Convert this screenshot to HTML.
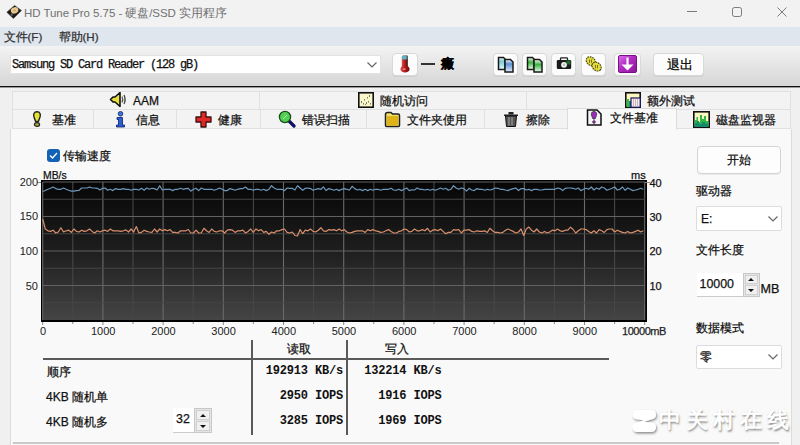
<!DOCTYPE html>
<html><head><meta charset="utf-8">
<style>
*{margin:0;padding:0;box-sizing:border-box}
html,body{width:800px;height:445px;overflow:hidden;background:#f0f0f0;font-family:"Liberation Sans",sans-serif;color:#111}
.t{position:absolute;white-space:nowrap;line-height:1;-webkit-text-stroke:0.25px currentColor}
.abs{position:absolute}
.btn{position:absolute;background:#fcfcfc;border:1px solid #d9d9d9;border-radius:4px;box-shadow:0 1px 0 rgba(0,0,0,0.06)}
.xl{position:absolute;top:326px;width:80px;text-align:center;font-size:11px;line-height:1;color:#222}
.yl{position:absolute;width:30px;text-align:right;font-size:11px;line-height:1;color:#222}
.mono{font-family:"Liberation Mono",monospace}
.val{letter-spacing:-0.18px;-webkit-text-stroke:0 !important}
.tab{position:absolute;font-size:12px;line-height:1;color:#111;-webkit-text-stroke:0.25px currentColor}
</style></head><body>
<!-- title bar -->
<div class="abs" style="left:0;top:0;width:800px;height:27px;background:#f2f2f2"></div>
<svg class="abs" style="left:0;top:0" width="24" height="24" viewBox="0 0 24 24">
  <path d="M6.8 12.2 L14.6 5.4 L21.5 10.6 L13.4 18.6 Z" fill="#1a1a1a" stroke="#333" stroke-width="0.5" stroke-linejoin="round"/>
  <ellipse cx="14.6" cy="10.4" rx="3.8" ry="3.1" transform="rotate(-20 14.6 10.4)" fill="#e9c98f"/>
  <ellipse cx="14.6" cy="10.4" rx="1.3" ry="1" fill="#c9a46a"/>
  <path d="M10.5 14.5 L12 16 L13 15 L11.5 13.5 Z" fill="#777"/>
</svg>
<div class="t" style="left:24px;top:7.5px;font-size:11.5px;letter-spacing:-0.05px;color:#707070;-webkit-text-stroke:0">HD Tune Pro 5.75 - 硬盘/SSD 实用程序</div>
<div class="abs" style="left:687px;top:11px;width:10px;height:1px;background:#7a7a7a"></div>
<div class="abs" style="left:731.5px;top:7px;width:10px;height:10px;border:1px solid #7a7a7a;border-radius:2.5px"></div>
<svg class="abs" style="left:777px;top:7px" width="10" height="10"><path d="M0.5 0.5 L9.5 9.5 M9.5 0.5 L0.5 9.5" stroke="#7a7a7a" stroke-width="1"/></svg>
<!-- menu bar -->
<div class="abs" style="left:0;top:27px;width:800px;height:19px;background:#dfe6ee"></div>
<div class="t" style="left:3.5px;top:30.5px;font-size:11.6px;color:#333">文件(F)</div>
<div class="t" style="left:58.5px;top:30.5px;font-size:11.6px;color:#333">帮助(H)</div>
<!-- toolbar -->
<div class="abs" style="left:0;top:46px;width:800px;height:40px;background:linear-gradient(#f3f3f3,#d6d6d6)"></div>
<div class="abs" style="left:0;top:86px;width:800px;height:1px;background:#111"></div><div class="abs" style="left:0;top:87px;width:800px;height:1px;background:#9a9a9a"></div>
<div class="abs" style="left:10px;top:55px;width:371px;height:19px;background:#fff;border:1px solid #e2e2e2"></div>
<div class="t mono" style="left:12px;top:59px;font-size:12px;letter-spacing:-1.2px;color:#111">Samsung SD Card Reader (128 gB)</div>
<svg class="abs" style="left:367px;top:62px" width="10" height="7"><path d="M0.5 0.5 L5 5 L9.5 0.5" stroke="#666" stroke-width="1.2" fill="none"/></svg>
<div class="btn" style="left:392px;top:53px;width:26px;height:23px"></div>
<svg class="abs" style="left:399px;top:55px" width="12" height="18" viewBox="0 0 12 18">
  <defs><linearGradient id="th" x1="0" y1="0" x2="1" y2="0"><stop offset="0" stop-color="#e05050"/><stop offset="0.5" stop-color="#b01c1c"/><stop offset="1" stop-color="#6a0c0c"/></linearGradient></defs>
  <rect x="2.8" y="0.5" width="6" height="12" rx="1.5" fill="url(#th)"/>
  <rect x="2.8" y="0.5" width="6" height="4" rx="1.5" fill="#5fb4c0"/>
  <rect x="7.5" y="0.5" width="1.3" height="12" fill="#2a3a3a" opacity="0.6"/>
  <ellipse cx="6" cy="14" rx="4.6" ry="3.6" fill="url(#th)"/>
  <ellipse cx="5.2" cy="14.2" rx="1.4" ry="0.9" fill="#f08080"/>
</svg>
<div class="abs" style="left:421px;top:63px;width:14px;height:2px;background:#333"></div>
<div class="t" style="left:440.5px;top:58px;font-size:12.5px;font-weight:bold;color:#000;-webkit-text-stroke:0.3px #000">癥</div>
<div class="btn" style="left:493px;top:53px;width:25px;height:23px"></div>
<div class="btn" style="left:522px;top:53px;width:25px;height:23px"></div>
<div class="btn" style="left:551px;top:53px;width:25px;height:23px"></div>
<div class="btn" style="left:581px;top:53px;width:25px;height:23px"></div>
<div class="btn" style="left:614px;top:53px;width:27px;height:23px"></div>
<div class="btn" style="left:653px;top:53px;width:51px;height:23px"></div>
<div class="t" style="left:666.5px;top:58.5px;font-size:12.5px;color:#000">退出</div>
<!-- icons -->
<svg class="abs" style="left:497px;top:56px" width="18" height="17" viewBox="0 0 18 17">
  <defs><linearGradient id="d1" x1="0" y1="0" x2="0" y2="1"><stop offset="0" stop-color="#fff"/><stop offset="0.3" stop-color="#7cc8d0"/><stop offset="1" stop-color="#dff"/></linearGradient>
  <linearGradient id="d2" x1="0" y1="0" x2="0" y2="1"><stop offset="0" stop-color="#fff"/><stop offset="0.35" stop-color="#5a90d0"/><stop offset="1" stop-color="#e8f0ff"/></linearGradient>
  <linearGradient id="d3" x1="0" y1="0" x2="0" y2="1"><stop offset="0" stop-color="#fff"/><stop offset="0.4" stop-color="#3cb040"/><stop offset="1" stop-color="#e8ffe8"/></linearGradient></defs>
  <path d="M1.5 1.5 H6.5 L8 3 V13.5 H1.5 Z" fill="url(#d1)" stroke="#1a1a1a" stroke-width="1.5"/>
  <path d="M8 3.5 H13.5 L16 6 V16 H8 Z" fill="url(#d2)" stroke="#1a1a1a" stroke-width="1.5"/>
</svg>
<svg class="abs" style="left:526px;top:56px" width="18" height="17" viewBox="0 0 18 17">
  <path d="M1.5 1.5 H6.5 L8 3 V13.5 H1.5 Z" fill="url(#d3)" stroke="#1a1a1a" stroke-width="1.5"/>
  <path d="M8 3.5 H13.5 L16 6 V16 H8 Z" fill="url(#d3)" stroke="#1a1a1a" stroke-width="1.5"/>
</svg>
<svg class="abs" style="left:556px;top:57px" width="16" height="13" viewBox="0 0 16 13">
  <path d="M4.5 3.5 V1.5 Q4.5 0.8 5.2 0.8 H10.8 Q11.5 0.8 11.5 1.5 V3.5" fill="none" stroke="#222" stroke-width="1.3"/>
  <rect x="0.8" y="3" width="14.4" height="9" rx="1.2" fill="#1c1c1c"/>
  <rect x="10.5" y="3.5" width="4" height="4" fill="#1d6a2a"/>
  <circle cx="8" cy="7.8" r="2.9" fill="#f4f4f4"/><circle cx="8" cy="7.8" r="1.3" fill="#bbb"/>
</svg>
<svg class="abs" style="left:585px;top:56px" width="18" height="16" viewBox="0 0 18 16">
  <g stroke="#4a4612" stroke-width="1.2" stroke-dasharray="1.6 0.8" fill="#e4dc3c">
  <ellipse cx="5.8" cy="5.2" rx="5" ry="3.9" transform="rotate(40 5.8 5.2)"/>
  <ellipse cx="11.6" cy="10.6" rx="5" ry="3.9" transform="rotate(40 11.6 10.6)"/>
  </g>
  <g stroke="#6a6418" stroke-width="0.9"><line x1="4.5" y1="3.5" x2="4.5" y2="6.8"/><line x1="6.5" y1="3.5" x2="6.5" y2="6.8"/><line x1="10.5" y1="9" x2="10.5" y2="12.3"/><line x1="12.5" y1="9" x2="12.5" y2="12.3"/></g>
</svg>
<svg class="abs" style="left:618px;top:55px" width="19" height="18" viewBox="0 0 19 18">
  <defs><linearGradient id="pu" x1="0" y1="0" x2="1" y2="1"><stop offset="0" stop-color="#e070f0"/><stop offset="0.45" stop-color="#b02cc0"/><stop offset="1" stop-color="#8a1898"/></linearGradient></defs>
  <rect x="0.5" y="0.5" width="18" height="17" rx="1.5" fill="url(#pu)" stroke="#7a1088" stroke-width="1"/>
  <path d="M9.5 2.5 V14" stroke="#fff" stroke-width="2.2"/>
  <path d="M3.5 9.5 L9.5 15.5 L15.5 9.5 Z" fill="#fff"/>
</svg>
<!-- tabs -->
<div class="abs" style="left:12px;top:91px;width:779px;height:38px;background:#f3f3f3;border:1px solid #e0e0e0"></div>
<div class="abs" style="left:12px;top:109px;width:779px;height:1px;background:#e0e0e0"></div>
<div class="abs" style="left:259px;top:91px;width:1px;height:18px;background:#e0e0e0"></div>
<div class="abs" style="left:526px;top:91px;width:1px;height:18px;background:#e0e0e0"></div>
<div class="abs" style="left:93px;top:110px;width:1px;height:19px;background:#e0e0e0"></div>
<div class="abs" style="left:176px;top:110px;width:1px;height:19px;background:#e0e0e0"></div>
<div class="abs" style="left:260px;top:110px;width:1px;height:19px;background:#e0e0e0"></div>
<div class="abs" style="left:366px;top:110px;width:1px;height:19px;background:#e0e0e0"></div>
<div class="abs" style="left:484px;top:110px;width:1px;height:19px;background:#e0e0e0"></div>
<!-- content panel -->
<div class="abs" style="left:10px;top:129px;width:782px;height:320px;background:#f9f9f9;border:1px solid #dcdcdc;border-top:none"></div>
<div class="abs" style="left:13px;top:442px;width:766px;height:2px;background:#c9c9c9"></div>

<!-- selected tab -->
<div class="abs" style="left:567px;top:108px;width:110px;height:21.5px;background:#f9f9f9;border:1px solid #dcdcdc;border-bottom:none"></div>

<div class="tab" style="left:133px;top:95px;font-size:12px">AAM</div>
<div class="tab" style="left:380px;top:95px">随机访问</div>
<div class="tab" style="left:647px;top:95px">额外测试</div>
<div class="tab" style="left:52px;top:114px">基准</div>
<div class="tab" style="left:136px;top:114px">信息</div>
<div class="tab" style="left:218px;top:114px">健康</div>
<div class="tab" style="left:302px;top:114px">错误扫描</div>
<div class="tab" style="left:407px;top:114px">文件夹使用</div>
<div class="tab" style="left:526px;top:114px">擦除</div>
<div class="tab" style="left:610px;top:112px">文件基准</div>
<div class="tab" style="left:716px;top:114px">磁盘监视器</div>


<!-- tab icons -->
<svg class="abs" style="left:109px;top:91px" width="18" height="17" viewBox="0 0 18 17">
  <path d="M1.5 8.5 L4 6 L6 6 L11 1.5 L11 15.5 L6 11 L4 11 Z" fill="#e8e040" stroke="#111" stroke-width="1.6" stroke-linejoin="round"/>
  <path d="M13 5.5 Q14.5 8.5 13 11.5" fill="none" stroke="#555" stroke-width="1.2"/>
  <path d="M15 4 Q17.2 8.5 15 13" fill="none" stroke="#333" stroke-width="1.2"/>
</svg>
<svg class="abs" style="left:358px;top:92px" width="16" height="16" viewBox="0 0 16 16">
  <rect x="0.8" y="0.8" width="14.4" height="14.4" fill="#fbf6c8" stroke="#111" stroke-width="1.6"/>
  <g fill="#777"><rect x="3" y="9" width="1" height="2"/><rect x="5" y="11" width="1" height="1.5"/><rect x="6" y="7" width="1" height="1.5"/><rect x="8" y="10" width="1" height="2"/><rect x="9" y="5" width="1" height="1.5"/><rect x="10" y="9" width="1" height="1.5"/><rect x="11" y="3" width="1" height="2"/><rect x="12" y="11" width="1" height="1.5"/><rect x="7" y="12" width="1" height="1"/></g>
</svg>
<svg class="abs" style="left:625px;top:92px" width="16" height="16" viewBox="0 0 16 16">
  <rect x="0.8" y="0.8" width="14.4" height="14.4" fill="#fbf8c0" stroke="#111" stroke-width="1.6"/>
  <rect x="1.6" y="7" width="2.4" height="8" fill="#3fb548"/><rect x="4" y="9" width="2" height="6" fill="#1c8a8a"/>
  <rect x="6" y="6" width="9.2" height="9.2" fill="#f4eef4" stroke="#111858" stroke-width="1.2"/>
  <g stroke="#c9a0b0" stroke-width="0.8"><line x1="8.5" y1="7" x2="8.5" y2="15"/><line x1="10.5" y1="7" x2="10.5" y2="15"/><line x1="12.5" y1="7" x2="12.5" y2="15"/></g>
</svg>
<svg class="abs" style="left:32px;top:111px" width="10" height="16" viewBox="0 0 10 16">
  <path d="M5 0.8 C8.2 0.8 8.8 3.5 8 6 L6.4 10.5 L3.6 10.5 L2 6 C1.2 3.5 1.8 0.8 5 0.8 Z" fill="#e6e238" stroke="#222" stroke-width="1.4"/>
  <ellipse cx="5" cy="13.5" rx="2.6" ry="1.9" fill="#aaa840" stroke="#222" stroke-width="1.2"/>
</svg>
<svg class="abs" style="left:115px;top:111px" width="11" height="17" viewBox="0 0 11 17">
  <circle cx="5.5" cy="2.8" r="2.3" fill="#3a78d8" stroke="#0c1c6a" stroke-width="0.8"/>
  <path d="M2 6.5 H7.5 V14 H9.5 V16 H1.5 V14 H3.5 V8.5 H2 Z" fill="#2a5fcf" stroke="#0c1c6a" stroke-width="0.8"/>
</svg>
<svg class="abs" style="left:195px;top:111px" width="17" height="17" viewBox="0 0 17 17">
  <path d="M6 1 H11 V6 H16 V11 H11 V16 H6 V11 H1 V6 H6 Z" fill="#e02828" stroke="#3a1010" stroke-width="1.3" stroke-linejoin="round"/>
</svg>
<svg class="abs" style="left:278px;top:110px" width="18" height="18" viewBox="0 0 18 18">
  <line x1="10" y1="10" x2="16" y2="16" stroke="#101060" stroke-width="3.2" stroke-linecap="round"/>
  <circle cx="7" cy="7" r="5.6" fill="#52d052" stroke="#1a4a1a" stroke-width="1.3"/>
  <path d="M5 9 L9 5" stroke="#a8f0a8" stroke-width="1"/>
</svg>
<svg class="abs" style="left:384px;top:111px" width="17" height="17" viewBox="0 0 17 17">
  <path d="M1.5 3.5 Q1.5 1.5 3.5 1.5 H7 L8.5 3 H14 Q15.5 3 15.5 4.5 V14.5 Q15.5 15.5 14.5 15.5 H2.5 Q1.5 15.5 1.5 14.5 Z" fill="#f2e070" stroke="#222" stroke-width="1.5"/>
  <rect x="3" y="5" width="11" height="9.5" fill="#e0b418"/>
</svg>
<svg class="abs" style="left:503px;top:111px" width="16" height="16" viewBox="0 0 16 16">
  <path d="M1 3.5 H15 V5 H1 Z" fill="#222"/><rect x="5.5" y="1" width="5" height="2.5" fill="#222"/>
  <path d="M2.5 5 H13.5 L12.5 15.5 H3.5 Z" fill="#555" stroke="#111" stroke-width="1"/>
  <g stroke="#aaa" stroke-width="1"><line x1="6" y1="6" x2="6" y2="14.5"/><line x1="9" y1="6" x2="9" y2="14.5"/></g>
</svg>
<svg class="abs" style="left:586px;top:109px" width="17" height="17" viewBox="0 0 17 17">
  <path d="M1.5 1 H11 L15 5 V16 H1.5 Z" fill="#f4f4f4" stroke="#111" stroke-width="1.5"/>
  <path d="M8 2.5 C11 2.5 11 5.5 10.2 7.2 L9 10 H7 L5.8 7.2 C5 5.5 5 2.5 8 2.5 Z" fill="#9a2ab8" stroke="#333" stroke-width="0.8"/>
  <circle cx="8" cy="13" r="1.4" fill="#9a2ab8" stroke="#333" stroke-width="0.6"/>
</svg>
<svg class="abs" style="left:693px;top:111px" width="17" height="17" viewBox="0 0 17 17">
  <rect x="0.8" y="0.8" width="15.4" height="15.4" fill="#f8f8c0" stroke="#111" stroke-width="1.6"/>
  <path d="M1.6 16 V9 H3.5 V6 H5 V11 H7 V4 H9 V8 H11 V5 H13 V10 H15.2 V16 Z" fill="#2eb848"/>
  <path d="M1.6 16 V12 H4 V10 H6 V13 H9 V11 H12 V12.5 H15.2 V16 Z" fill="#158a6a"/>
</svg>

<!-- checkbox -->
<div class="abs" style="left:47px;top:149px;width:13px;height:13px;background:#1462b4;border-radius:3px"></div>
<svg class="abs" style="left:47px;top:149px" width="13" height="13"><path d="M3 6.5 L5.5 9 L10 4" stroke="#fff" stroke-width="1.3" fill="none"/></svg>
<div class="t" style="left:63px;top:150px;font-size:12px">传输速度</div>

<!-- chart -->
<div class="t" style="left:43px;top:170.5px;font-size:10.4px">MB/s</div>
<div class="t" style="left:631px;top:170px;font-size:11px">ms</div>
<svg class="abs" style="left:0;top:0" width="800" height="445">
  <defs><linearGradient id="g" x1="0" y1="0" x2="0" y2="1">
    <stop offset="0" stop-color="#060606"/><stop offset="0.5" stop-color="#1e1e1e"/><stop offset="1" stop-color="#454545"/></linearGradient></defs>
  <rect x="41" y="180" width="606" height="142" fill="#000"/>
  <rect x="43" y="182" width="602" height="138" fill="url(#g)"/>
  <line x1="42.7" y1="182" x2="42.7" y2="320" stroke="#6a6a6a" stroke-width="1.1"/><line x1="72.8" y1="182" x2="72.8" y2="320" stroke="#474747" stroke-width="1.1"/><line x1="102.9" y1="182" x2="102.9" y2="320" stroke="#6a6a6a" stroke-width="1.1"/><line x1="133.0" y1="182" x2="133.0" y2="320" stroke="#474747" stroke-width="1.1"/><line x1="163.1" y1="182" x2="163.1" y2="320" stroke="#6a6a6a" stroke-width="1.1"/><line x1="193.2" y1="182" x2="193.2" y2="320" stroke="#474747" stroke-width="1.1"/><line x1="223.3" y1="182" x2="223.3" y2="320" stroke="#6a6a6a" stroke-width="1.1"/><line x1="253.4" y1="182" x2="253.4" y2="320" stroke="#474747" stroke-width="1.1"/><line x1="283.5" y1="182" x2="283.5" y2="320" stroke="#6a6a6a" stroke-width="1.1"/><line x1="313.6" y1="182" x2="313.6" y2="320" stroke="#474747" stroke-width="1.1"/><line x1="343.7" y1="182" x2="343.7" y2="320" stroke="#6a6a6a" stroke-width="1.1"/><line x1="373.8" y1="182" x2="373.8" y2="320" stroke="#474747" stroke-width="1.1"/><line x1="403.9" y1="182" x2="403.9" y2="320" stroke="#6a6a6a" stroke-width="1.1"/><line x1="434.0" y1="182" x2="434.0" y2="320" stroke="#474747" stroke-width="1.1"/><line x1="464.1" y1="182" x2="464.1" y2="320" stroke="#6a6a6a" stroke-width="1.1"/><line x1="494.2" y1="182" x2="494.2" y2="320" stroke="#474747" stroke-width="1.1"/><line x1="524.3" y1="182" x2="524.3" y2="320" stroke="#6a6a6a" stroke-width="1.1"/><line x1="554.4" y1="182" x2="554.4" y2="320" stroke="#474747" stroke-width="1.1"/><line x1="584.5" y1="182" x2="584.5" y2="320" stroke="#6a6a6a" stroke-width="1.1"/><line x1="614.6" y1="182" x2="614.6" y2="320" stroke="#474747" stroke-width="1.1"/><line x1="644.7" y1="182" x2="644.7" y2="320" stroke="#6a6a6a" stroke-width="1.1"/><line x1="43" y1="302.75" x2="645" y2="302.75" stroke="#464646" stroke-width="1.1"/><line x1="43" y1="285.50" x2="645" y2="285.50" stroke="#626262" stroke-width="1.1"/><line x1="43" y1="268.25" x2="645" y2="268.25" stroke="#464646" stroke-width="1.1"/><line x1="43" y1="251.00" x2="645" y2="251.00" stroke="#626262" stroke-width="1.1"/><line x1="43" y1="233.75" x2="645" y2="233.75" stroke="#464646" stroke-width="1.1"/><line x1="43" y1="216.50" x2="645" y2="216.50" stroke="#626262" stroke-width="1.1"/><line x1="43" y1="199.25" x2="645" y2="199.25" stroke="#464646" stroke-width="1.1"/><line x1="43" y1="182.00" x2="645" y2="182.00" stroke="#626262" stroke-width="1.1"/>
  <line x1="42.7" y1="322" x2="42.7" y2="325" stroke="#888" stroke-width="1"/><line x1="72.8" y1="322" x2="72.8" y2="324" stroke="#888" stroke-width="1"/><line x1="102.9" y1="322" x2="102.9" y2="325" stroke="#888" stroke-width="1"/><line x1="133.0" y1="322" x2="133.0" y2="324" stroke="#888" stroke-width="1"/><line x1="163.1" y1="322" x2="163.1" y2="325" stroke="#888" stroke-width="1"/><line x1="193.2" y1="322" x2="193.2" y2="324" stroke="#888" stroke-width="1"/><line x1="223.3" y1="322" x2="223.3" y2="325" stroke="#888" stroke-width="1"/><line x1="253.4" y1="322" x2="253.4" y2="324" stroke="#888" stroke-width="1"/><line x1="283.5" y1="322" x2="283.5" y2="325" stroke="#888" stroke-width="1"/><line x1="313.6" y1="322" x2="313.6" y2="324" stroke="#888" stroke-width="1"/><line x1="343.7" y1="322" x2="343.7" y2="325" stroke="#888" stroke-width="1"/><line x1="373.8" y1="322" x2="373.8" y2="324" stroke="#888" stroke-width="1"/><line x1="403.9" y1="322" x2="403.9" y2="325" stroke="#888" stroke-width="1"/><line x1="434.0" y1="322" x2="434.0" y2="324" stroke="#888" stroke-width="1"/><line x1="464.1" y1="322" x2="464.1" y2="325" stroke="#888" stroke-width="1"/><line x1="494.2" y1="322" x2="494.2" y2="324" stroke="#888" stroke-width="1"/><line x1="524.3" y1="322" x2="524.3" y2="325" stroke="#888" stroke-width="1"/><line x1="554.4" y1="322" x2="554.4" y2="324" stroke="#888" stroke-width="1"/><line x1="584.5" y1="322" x2="584.5" y2="325" stroke="#888" stroke-width="1"/><line x1="614.6" y1="322" x2="614.6" y2="324" stroke="#888" stroke-width="1"/><line x1="644.7" y1="322" x2="644.7" y2="325" stroke="#888" stroke-width="1"/>
  <line x1="37" y1="182.5" x2="41" y2="182.5" stroke="#888"/>
  <line x1="645" y1="182.5" x2="650" y2="182.5" stroke="#888"/>
  <polyline points="42.7,191.5 45.3,190.5 47.9,189.3 50.5,188.3 53.1,187.0 55.7,188.6 58.3,189.3 60.9,189.3 63.5,188.0 66.1,189.3 68.7,190.3 71.3,191.1 73.9,191.1 76.5,190.6 79.1,190.3 81.7,188.0 84.3,188.0 86.9,188.0 89.5,187.0 92.1,188.0 94.7,188.0 97.3,188.3 99.9,190.0 102.5,188.3 105.1,188.0 107.7,190.3 110.3,189.3 112.9,190.6 115.5,188.6 118.1,189.3 120.7,189.3 123.3,188.6 125.9,189.3 128.5,189.3 131.1,190.3 133.7,189.3 136.3,189.3 138.9,190.0 141.5,188.3 144.1,190.3 146.7,188.0 149.3,189.3 151.9,188.3 154.5,188.6 157.1,190.0 159.7,185.7 162.3,190.0 164.9,189.3 167.5,189.3 170.1,189.3 172.7,190.6 175.3,189.3 177.9,189.3 180.5,188.3 183.1,189.3 185.7,188.6 188.3,188.3 190.9,191.1 193.5,189.3 196.1,188.3 198.7,190.6 201.3,188.0 203.9,189.3 206.5,189.3 209.1,189.3 211.7,189.3 214.3,190.3 216.9,189.3 219.5,188.0 222.1,189.3 224.7,190.6 227.3,190.6 229.9,188.6 232.5,189.3 235.1,190.3 237.7,189.3 240.3,188.6 242.9,188.6 245.5,187.0 248.1,189.3 250.7,189.3 253.3,190.3 255.9,189.3 258.5,189.3 261.1,190.3 263.7,189.3 266.3,190.6 268.9,189.3 271.5,185.7 274.1,188.0 276.7,189.3 279.3,189.3 281.9,189.3 284.5,190.6 287.1,188.0 289.7,188.3 292.3,188.3 294.9,190.0 297.5,185.7 300.1,188.0 302.7,190.3 305.3,188.3 307.9,188.0 310.5,188.6 313.1,190.3 315.7,189.3 318.3,188.6 320.9,189.3 323.5,187.0 326.1,190.6 328.7,188.6 331.3,189.3 333.9,190.3 336.5,189.3 339.1,190.6 341.7,189.3 344.3,188.6 346.9,189.3 349.5,190.0 352.1,186.3 354.7,188.6 357.3,190.0 359.9,189.3 362.5,190.6 365.1,189.3 367.7,190.6 370.3,189.3 372.9,190.3 375.5,189.3 378.1,189.3 380.7,190.3 383.3,189.3 385.9,189.3 388.5,189.3 391.1,188.3 393.7,190.0 396.3,190.3 398.9,189.3 401.5,190.6 404.1,189.3 406.7,188.0 409.3,190.6 411.9,189.8 414.5,190.0 417.1,188.0 419.7,189.3 422.3,189.3 424.9,190.0 427.5,189.3 430.1,190.3 432.7,189.3 435.3,190.3 437.9,189.3 440.5,188.0 443.1,189.3 445.7,188.3 448.3,190.3 450.9,189.3 453.5,185.7 456.1,188.0 458.7,189.3 461.3,188.0 463.9,188.6 466.5,191.1 469.1,188.3 471.7,190.0 474.3,190.6 476.9,188.6 479.5,189.3 482.1,189.3 484.7,190.3 487.3,189.3 489.9,190.0 492.5,189.3 495.1,188.0 497.7,188.3 500.3,189.3 502.9,189.3 505.5,190.0 508.1,190.6 510.7,189.3 513.3,188.6 515.9,188.0 518.5,190.6 521.1,188.6 523.7,188.6 526.3,190.0 528.9,189.3 531.5,190.6 534.1,189.3 536.7,189.3 539.3,190.0 541.9,190.0 544.5,189.3 547.1,189.3 549.7,189.3 552.3,189.3 554.9,189.3 557.5,188.0 560.1,188.6 562.7,190.6 565.3,188.3 567.9,188.0 570.5,188.0 573.1,188.3 575.7,189.3 578.3,188.0 580.9,190.6 583.5,189.3 586.1,188.3 588.7,189.3 591.3,187.0 593.9,190.0 596.5,188.0 599.1,189.3 601.7,187.0 604.3,188.0 606.9,190.3 609.5,189.3 612.1,188.3 614.7,187.0 617.3,190.0 619.9,189.3 622.5,187.0 625.1,190.3 627.7,188.0 630.3,189.3 632.9,190.6 635.5,190.0 638.1,189.3 640.7,188.3 643.3,189.3" fill="none" stroke="#6c98bc" stroke-width="1.2" stroke-linejoin="round"/>
  <polyline points="42.7,219.0 45.3,229.0 47.9,230.8 50.5,231.4 53.1,230.2 55.7,233.0 58.3,232.0 60.9,227.7 63.5,232.0 66.1,230.8 68.7,230.2 71.3,232.4 73.9,229.0 76.5,231.4 79.1,232.0 81.7,230.2 84.3,231.4 86.9,230.8 89.5,229.0 92.1,231.4 94.7,233.0 97.3,230.8 99.9,232.0 102.5,230.8 105.1,230.2 107.7,231.4 110.3,229.0 112.9,230.8 115.5,230.8 118.1,230.8 120.7,231.4 123.3,230.8 125.9,229.9 128.5,232.0 131.1,229.0 133.7,232.0 136.3,226.5 138.9,233.0 141.5,232.4 144.1,230.2 146.7,231.4 149.3,232.0 151.9,232.4 154.5,229.0 157.1,232.0 159.7,229.0 162.3,230.8 164.9,229.6 167.5,230.8 170.1,229.6 172.7,232.4 175.3,232.4 177.9,233.0 180.5,230.8 183.1,230.8 185.7,230.8 188.3,229.5 190.9,233.0 193.5,233.0 196.1,230.2 198.7,233.0 201.3,233.0 203.9,228.3 206.5,230.8 209.1,232.4 211.7,229.0 214.3,231.4 216.9,232.0 219.5,230.8 222.1,230.8 224.7,233.0 227.3,230.2 229.9,229.6 232.5,230.2 235.1,232.4 237.7,230.8 240.3,230.8 242.9,230.2 245.5,233.0 248.1,231.4 250.7,229.0 253.3,232.4 255.9,229.0 258.5,230.8 261.1,229.6 263.7,232.4 266.3,231.4 268.9,234.3 271.5,232.0 274.1,233.0 276.7,230.8 279.3,230.8 281.9,229.6 284.5,229.0 287.1,232.4 289.7,233.0 292.3,232.0 294.9,235.5 297.5,235.9 300.1,229.6 302.7,233.7 305.3,230.2 307.9,230.8 310.5,229.0 313.1,231.4 315.7,232.0 318.3,230.2 320.9,227.7 323.5,230.8 326.1,231.4 328.7,229.6 331.3,230.2 333.9,229.6 336.5,230.8 339.1,229.0 341.7,230.8 344.3,229.6 346.9,232.0 349.5,233.0 352.1,232.4 354.7,231.4 357.3,230.8 359.9,230.8 362.5,230.8 365.1,232.4 367.7,229.6 370.3,230.8 372.9,229.6 375.5,230.8 378.1,231.4 380.7,232.4 383.3,232.0 385.9,230.8 388.5,229.6 391.1,231.4 393.7,233.0 396.3,233.0 398.9,231.4 401.5,230.8 404.1,229.0 406.7,229.6 409.3,232.0 411.9,231.4 414.5,229.0 417.1,230.8 419.7,230.8 422.3,229.6 424.9,230.8 427.5,228.3 430.1,232.0 432.7,230.2 435.3,229.6 437.9,230.8 440.5,229.0 443.1,231.4 445.7,233.7 448.3,232.4 450.9,232.4 453.5,229.6 456.1,230.2 458.7,229.6 461.3,233.0 463.9,230.2 466.5,230.2 469.1,229.6 471.7,231.4 474.3,232.0 476.9,230.8 479.5,231.4 482.1,231.4 484.7,230.8 487.3,232.4 489.9,228.3 492.5,230.8 495.1,232.4 497.7,232.4 500.3,233.0 502.9,232.4 505.5,230.2 508.1,229.0 510.7,230.2 513.3,231.4 515.9,233.0 518.5,232.0 521.1,229.0 523.7,235.5 526.3,229.0 528.9,227.1 531.5,230.2 534.1,232.0 536.7,229.0 539.3,232.0 541.9,233.0 544.5,231.4 547.1,233.0 549.7,232.0 552.3,230.2 554.9,230.8 557.5,229.0 560.1,230.8 562.7,231.4 565.3,230.2 567.9,230.2 570.5,227.1 573.1,229.5 575.7,233.0 578.3,230.8 580.9,229.0 583.5,229.0 586.1,229.6 588.7,231.4 591.3,233.0 593.9,230.8 596.5,233.0 599.1,229.6 601.7,230.8 604.3,232.4 606.9,229.6 609.5,229.0 612.1,229.0 614.7,232.0 617.3,230.2 619.9,231.4 622.5,232.4 625.1,233.0 627.7,231.4 630.3,233.0 632.9,232.4 635.5,231.4 638.1,230.2 640.7,232.0 643.3,230.8" fill="none" stroke="#d9906c" stroke-width="1.2" stroke-linejoin="round"/>
</svg>
<div class="yl" style="left:8px;top:177px">200</div>
<div class="yl" style="left:8px;top:211px">150</div>
<div class="yl" style="left:8px;top:246px">100</div>
<div class="yl" style="left:8px;top:280.5px">50</div>
<div class="t" style="left:649.5px;top:177.5px;font-size:11px">40</div>
<div class="t" style="left:649.5px;top:211.5px;font-size:11px">30</div>
<div class="t" style="left:649.5px;top:246px;font-size:11px">20</div>
<div class="t" style="left:649.5px;top:280.5px;font-size:11px">10</div>
<div class="xl" style="left:3.0px">0</div><div class="xl" style="left:63.2px">1000</div><div class="xl" style="left:123.4px">2000</div><div class="xl" style="left:183.6px">3000</div><div class="xl" style="left:243.8px">4000</div><div class="xl" style="left:304.0px">5000</div><div class="xl" style="left:364.2px">6000</div><div class="xl" style="left:424.4px">7000</div><div class="xl" style="left:484.6px">8000</div><div class="xl" style="left:544.8px">9000</div><div class="t" style="left:622px;top:326px;font-size:11px;letter-spacing:-0.45px;color:#222">10000mB</div>

<!-- table -->
<div class="abs" style="left:43px;top:358px;width:566px;height:2px;background:#5a5a5a"></div>
<div class="abs" style="left:251px;top:340px;width:2px;height:95px;background:#5a5a5a"></div>
<div class="abs" style="left:346px;top:340px;width:2px;height:95px;background:#5a5a5a"></div>
<div class="t" style="left:287px;top:343px;font-size:12px">读取</div>
<div class="t" style="left:385px;top:343px;font-size:12px">写入</div>
<div class="t" style="left:47px;top:366px;font-size:12px">顺序</div>
<div class="t" style="left:46px;top:391px;font-size:12px">4KB 随机单</div>
<div class="t" style="left:46px;top:416px;font-size:12px">4KB 随机多</div>
<div class="t mono val" style="left:199px;width:144px;text-align:right;top:365px;font-size:12px;font-weight:bold">192913 KB/s</div>
<div class="t mono val" style="left:199px;width:144px;text-align:right;top:390px;font-size:12px;font-weight:bold">2950 IOPS</div>
<div class="t mono val" style="left:199px;width:144px;text-align:right;top:415px;font-size:12px;font-weight:bold">3285 IOPS</div>
<div class="t mono val" style="left:298.5px;width:143px;text-align:right;top:365px;font-size:12px;font-weight:bold">132214 KB/s</div>
<div class="t mono val" style="left:298.5px;width:143px;text-align:right;top:390px;font-size:12px;font-weight:bold">1916 IOPS</div>
<div class="t mono val" style="left:298.5px;width:143px;text-align:right;top:415px;font-size:12px;font-weight:bold">1969 IOPS</div>
<!-- spin 32 -->
<div class="abs" style="left:173px;top:408px;width:22px;height:25px;background:#fff;border-bottom:1px solid #ccc"></div>
<div class="t" style="left:176px;top:413px;font-size:12.4px">32</div>
<div class="abs" style="left:194px;top:408px;width:18px;height:25px;background:#e4e4e4;border:1px solid #c8c8c8"></div>
<div class="abs" style="left:196px;top:410px;width:14px;height:10px;background:#f0f0f0;border:1px solid #d0d0d0"></div>
<div class="abs" style="left:196px;top:421px;width:14px;height:10px;background:#f0f0f0;border:1px solid #d0d0d0"></div>
<svg class="abs" style="left:199px;top:412px" width="8" height="18"><path d="M1 5 L4 2 L7 5Z M1 13 L4 16 L7 13Z" fill="#111"/></svg>

<!-- right panel -->
<div class="btn" style="left:697px;top:146px;width:84px;height:28px;border-color:#d4d4d4;background:#fdfdfd"></div>
<div class="t" style="left:727px;top:154px;font-size:12px">开始</div>
<div class="t" style="left:696px;top:185px;font-size:12px">驱动器</div>
<div class="abs" style="left:696px;top:206px;width:86px;height:25px;background:#fff;border:1px solid #dcdcdc;border-radius:2px"></div>
<div class="t" style="left:701px;top:213px;font-size:12px">E:</div>
<svg class="abs" style="left:768px;top:216px" width="10" height="7"><path d="M0.5 0.5 L5 5 L9.5 0.5" stroke="#666" stroke-width="1.2" fill="none"/></svg>
<div class="t" style="left:696px;top:244px;font-size:12px">文件长度</div>
<div class="abs" style="left:697px;top:273px;width:47px;height:24px;background:#fff;border-bottom:1px solid #ccc"></div>
<div class="t" style="left:699.5px;top:278px;font-size:12.4px">10000</div>
<div class="abs" style="left:743px;top:273px;width:17px;height:24px;background:#e4e4e4;border:1px solid #c8c8c8"></div>
<div class="abs" style="left:745px;top:275px;width:13px;height:9px;background:#f0f0f0;border:1px solid #d0d0d0"></div>
<div class="abs" style="left:745px;top:285px;width:13px;height:10px;background:#f0f0f0;border:1px solid #d0d0d0"></div>
<svg class="abs" style="left:747px;top:276px" width="8" height="18"><path d="M1 5 L4 2 L7 5Z M1 13 L4 16 L7 13Z" fill="#111"/></svg>
<div class="t" style="left:760.5px;top:282.5px;font-size:12.6px">MB</div>
<div class="t" style="left:696px;top:322px;font-size:12px">数据模式</div>
<div class="abs" style="left:696px;top:345px;width:86px;height:24px;background:#fff;border:1px solid #dcdcdc;border-radius:2px"></div>
<div class="t" style="left:700px;top:351px;font-size:12px">零</div>
<svg class="abs" style="left:768px;top:354px" width="10" height="7"><path d="M0.5 0.5 L5 5 L9.5 0.5" stroke="#666" stroke-width="1.2" fill="none"/></svg>

<!-- watermark -->
<svg class="abs" style="left:631px;top:409px;overflow:visible" width="26" height="23" viewBox="0 0 26 23">
  <defs><filter id="sh" x="-20%" y="-20%" width="140%" height="140%"><feDropShadow dx="1" dy="1.5" stdDeviation="1.2" flood-color="#000" flood-opacity="0.45"/></filter></defs>
  <path d="M6.5 1 H19.5 Q25 1 25 5.8 Q25 9.5 20.5 10.3 L13 12.8 L20.5 13.8 Q25 14.5 25 18.2 Q25 23 19.5 23 H6.5 Q1.5 23 1.5 18.2 Q1.5 14.5 6 13.8 L13 11.2 L6 10.3 Q1.5 9.5 1.5 5.8 Q1.5 1 6.5 1 Z" fill="#fff" filter="url(#sh)"/>
</svg>
<div class="t" style="left:659px;top:409px;font-size:22px;color:#fff;letter-spacing:5px;-webkit-text-stroke:0.9px #fff;text-shadow:1px 1.5px 2px rgba(0,0,0,0.5),0 0 1.5px rgba(0,0,0,0.25)">中关村在线</div>
</body></html>
